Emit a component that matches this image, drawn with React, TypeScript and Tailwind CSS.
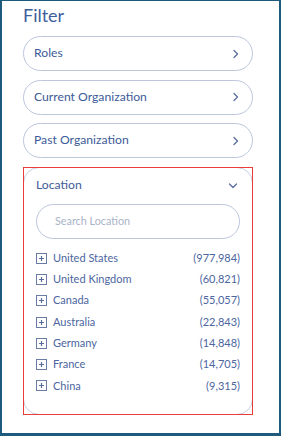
import React from "react";

const countries: [string, string][] = [
  ["United States", "(977,984)"],
  ["United Kingdom", "(60,821)"],
  ["Canada", "(55,057)"],
  ["Australia", "(22,843)"],
  ["Germany", "(14,848)"],
  ["France", "(14,705)"],
  ["China", "(9,315)"],
];

function ChevronRight() {
  return (
    <svg width="8" height="10" viewBox="0 0 8 10" fill="none">
      <path d="M2 1.5 L5.5 5 L2 8.5" stroke="#5b6f9c" strokeWidth="1.3" strokeLinecap="round" strokeLinejoin="round" />
    </svg>
  );
}

function ChevronDown() {
  return (
    <svg width="10" height="8" viewBox="0 0 10 8" fill="none">
      <path d="M1.5 2 L5 5.5 L8.5 2" stroke="#5b6f9c" strokeWidth="1.3" strokeLinecap="round" strokeLinejoin="round" />
    </svg>
  );
}

function PlusBox() {
  return (
    <svg width="11" height="11" viewBox="0 0 11 11" fill="none">
      <rect x="0.5" y="0.5" width="10" height="10" stroke="#6a7ca6" strokeWidth="1" />
      <path d="M5.5 3 V8 M3 5.5 H8" stroke="#5a6e9c" strokeWidth="1.2" />
    </svg>
  );
}

function Pill({ label }: { label: string }) {
  return (
    <div className="flex h-[35px] items-center justify-between rounded-full border border-[#bcc7dd] pl-[10px] pr-[12px]">
      <span className="text-[12.2px] text-[#3d5b98]">{label}</span>
      <ChevronRight />
    </div>
  );
}

export default function App() {
  return (
    <div
      className="h-[436px] w-[281px] border-b-[3px] border-l-2 border-r-2 border-t border-[#1d5a7b] bg-white pl-[21px] pr-[26px]"
      style={{ fontFamily: 'Lato, sans-serif' }}
    >
      <div className="text-[18px] leading-[28px] text-[#3f5f9c]">Filter</div>
      <div className="mt-[7px] flex flex-col gap-[8.5px]">
        <Pill label="Roles" />
        <Pill label="Current Organization" />
        <Pill label="Past Organization" />
        <div className="relative h-[248px]">
          <div className="h-full rounded-[16px] border border-[#c8d1e2] px-[12px]">
            <div className="flex h-[36px] items-center justify-between pr-[2px]">
              <span className="text-[12.2px] text-[#3d5b98]">Location</span>
              <ChevronDown />
            </div>
            <div className="flex h-[35px] items-center rounded-full border border-[#bcc7dd] pl-[18px]">
              <span className="text-[10.8px] text-[#a9b3c7]">Search Location</span>
            </div>
            <div className="mt-[9px] flex flex-col">
              {countries.map(([name, count]) => (
                <div key={name} className="flex h-[21.3px] items-center justify-between">
                  <div className="flex items-center gap-[6px]">
                    <PlusBox />
                    <span className="text-[11px] text-[#4c66a0]">{name}</span>
                  </div>
                  <span className="text-[11px] text-[#4c66a0]">{count}</span>
                </div>
              ))}
            </div>
          </div>
          <div className="pointer-events-none absolute inset-0 border border-[#ec3b3b]" />
        </div>
      </div>
    </div>
  );
}
